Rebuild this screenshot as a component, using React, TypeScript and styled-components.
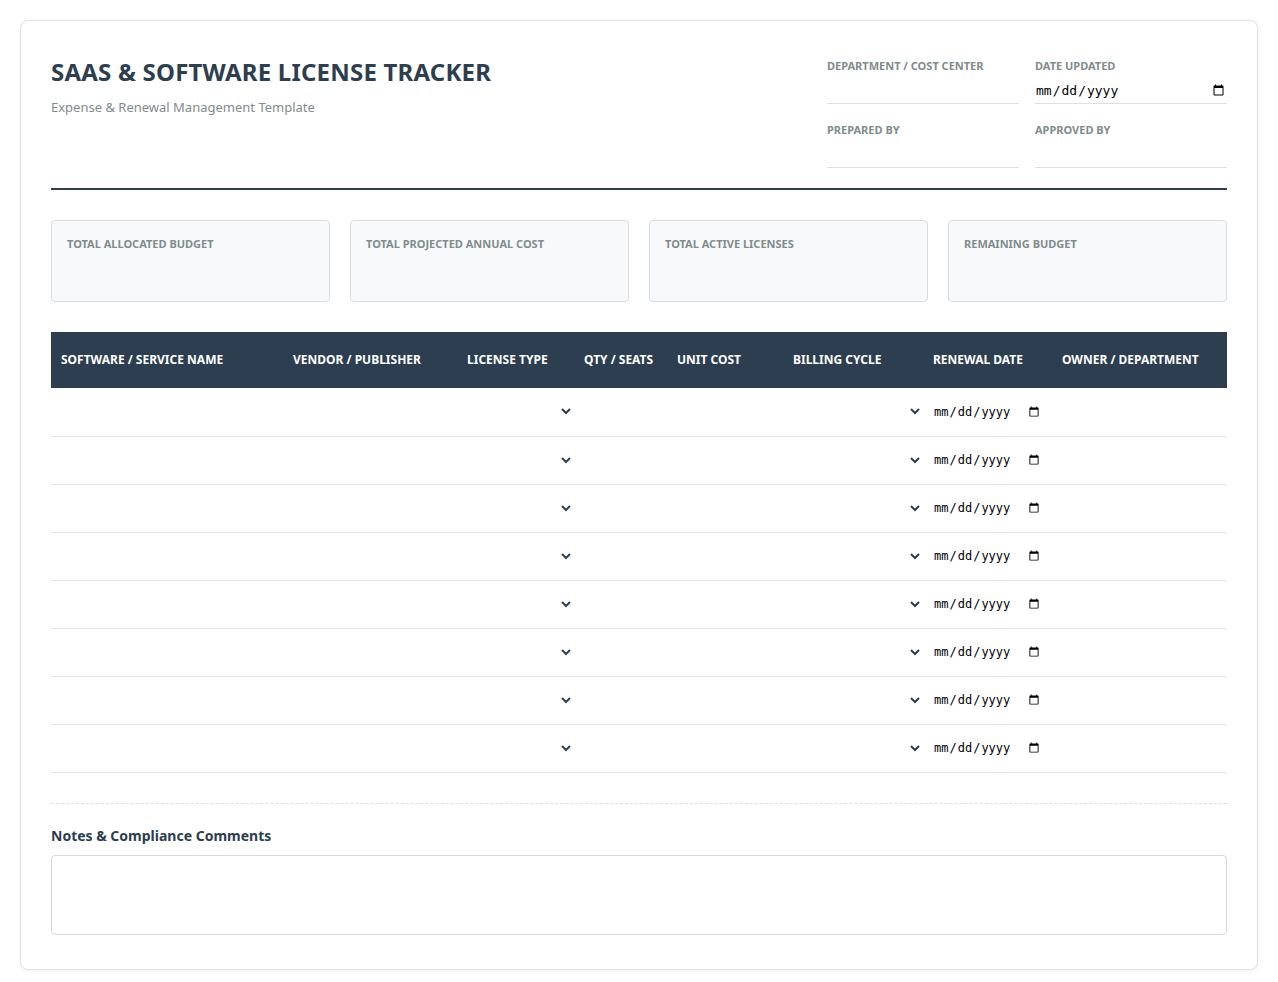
import React from "react";
import styled, { createGlobalStyle } from "styled-components";

const Global = createGlobalStyle`
  body { margin: 0; background: #fff; font-family: "Noto Sans", "Open Sans", sans-serif; color: #2c3e50; }
  * { box-sizing: border-box; }
`;

const Page = styled.div`padding: 20px;`;
const Card = styled.div`
  border: 1px solid #dfe3e6; border-radius: 8px; padding: 30px 30px 34px;
  box-shadow: 0 1px 4px rgba(0,0,0,0.06); background: #fff;
`;
const Header = styled.div`
  display: flex; justify-content: space-between; padding-bottom: 20px;
  border-bottom: 2px solid #2c3e50;
`;
const Title = styled.h1`margin: 4px 0 0; font-size: 24px; font-weight: 700; color: #2c3e50; letter-spacing: 0.2px;`;
const Subtitle = styled.div`margin-top: 10px; font-size: 13px; color: #7f8c8d;`;
const Meta = styled.div`display: grid; grid-template-columns: 192px 192px; column-gap: 16px; row-gap: 18px; margin-top: 7px;`;
const Field = styled.div`display: flex; flex-direction: column;`;
const Label = styled.label`font-size: 11px; font-weight: 700; color: #7f8c8d; text-transform: uppercase;`;
const LineInput = styled.input`
  border: none; border-bottom: 1px solid #dcdfe3; height: 27px; padding: 0; margin-top: 4px;
  font-size: 13px; background: transparent; outline: none;
`;
const Stats = styled.div`display: grid; grid-template-columns: repeat(4, 1fr); gap: 20px; margin-top: 30px;`;
const Stat = styled.div`
  height: 82px; background: #f8f9fa; border: 1px solid #d9dde1; border-radius: 4px; padding: 15px;
  font-size: 11px; font-weight: 700; color: #7f8c8d; text-transform: uppercase;
`;
const Table = styled.table`width: 100%; border-collapse: collapse; margin-top: 30px; table-layout: fixed;`;
const Th = styled.th`
  background: #2c3e50; color: #fff; font-size: 12px; font-weight: 700; text-align: left;
  padding: 0 10px; height: 56px; text-transform: uppercase; line-height: 16px;
`;
const Td = styled.td`height: 48px; border-bottom: 1px solid #e2e5e8; padding: 0;`;
const CellInput = styled.input`
  width: 100%; border: none; background: transparent; padding: 0 10px; height: 47px; outline: none;
  font-size: 12px;
`;
const CellSelect = styled.select`
  width: 100%; border: none; background: transparent; height: 47px; padding: 0 10px; outline: none;
  font-size: 12px; color: #2c3e50;
`;
const Notes = styled.div`margin-top: 30px; border-top: 1px dashed #dcdfe3; padding-top: 22px;`;
const NotesLabel = styled.div`font-size: 14px; font-weight: 700; color: #2c3e50; margin-bottom: 10px;`;
const Textarea = styled.textarea`
  display: block; width: 100%; height: 80px; border: 1px solid #d5d9dd; border-radius: 4px; resize: none;
`;

const cols = [232, 174, 117, 93, 116, 140, 129, 175];
const heads = ["Software / Service Name", "Vendor / Publisher", "License Type", "Qty / Seats", "Unit Cost", "Billing Cycle", "Renewal Date", "Owner / Department"];

export default function App() {
  return (
    <Page>
      <Global />
      <Card>
        <Header>
          <div>
            <Title>SAAS &amp; SOFTWARE LICENSE TRACKER</Title>
            <Subtitle>Expense &amp; Renewal Management Template</Subtitle>
          </div>
          <Meta>
            <Field><Label>Department / Cost Center</Label><LineInput /></Field>
            <Field><Label>Date Updated</Label><LineInput type="date" /></Field>
            <Field><Label>Prepared By</Label><LineInput /></Field>
            <Field><Label>Approved By</Label><LineInput /></Field>
          </Meta>
        </Header>
        <Stats>
          <Stat>Total Allocated Budget</Stat>
          <Stat>Total Projected Annual Cost</Stat>
          <Stat>Total Active Licenses</Stat>
          <Stat>Remaining Budget</Stat>
        </Stats>
        <Table>
          <colgroup>{cols.map((w, i) => <col key={i} style={{ width: w }} />)}</colgroup>
          <thead><tr>{heads.map(h => <Th key={h}>{h}</Th>)}</tr></thead>
          <tbody>
            {Array.from({ length: 8 }).map((_, r) => (
              <tr key={r}>
                <Td><CellInput /></Td>
                <Td><CellInput /></Td>
                <Td><CellSelect><option></option></CellSelect></Td>
                <Td><CellInput /></Td>
                <Td><CellInput /></Td>
                <Td><CellSelect><option></option></CellSelect></Td>
                <Td><CellInput type="date" /></Td>
                <Td><CellInput /></Td>
              </tr>
            ))}
          </tbody>
        </Table>
        <Notes>
          <NotesLabel>Notes &amp; Compliance Comments</NotesLabel>
          <Textarea />
        </Notes>
      </Card>
    </Page>
  );
}
